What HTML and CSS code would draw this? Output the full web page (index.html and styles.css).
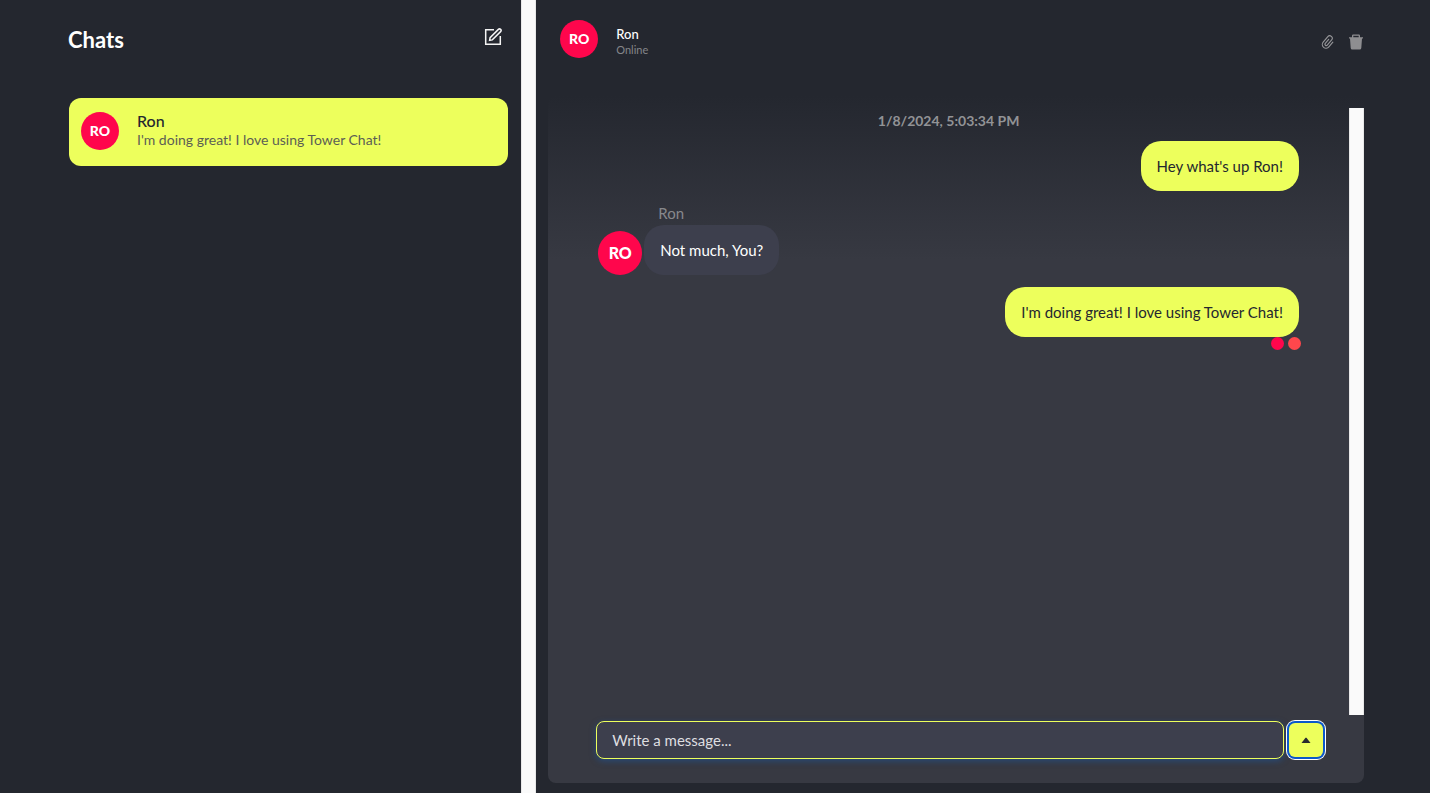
FILE: index.html
```html
<!DOCTYPE html>
<html lang="en">
<head>
<meta charset="utf-8">
<meta name="viewport" content="width=device-width, initial-scale=1">
<title>Tower Chat</title>
<link rel="stylesheet" href="styles.css">
</head>
<body>
<div class="app">
  <aside class="sidebar">
    <div class="sidebar-content">
      <header class="sidebar-header">
        <h1 class="title">Chats</h1>
        <button class="icon-button" type="button" aria-label="New chat">
          <svg width="18" height="18" viewBox="0 0 18 18" fill="none" stroke="#f4f4f4" stroke-width="1.5"><path d="M10 1.700H1.700v14.600h14.600V8"/><path d="M5.600 12.400l.5-2.700 8.300-8.300a1.400 1.400 0 0 1 2.200 2.200l-8.300 8.300z"/></svg>
        </button>
      </header>
      <a class="chat-card" href="#ron">
        <span class="avatar">RO</span>
        <span class="chat-summary">
          <span class="chat-name">Ron</span>
          <span class="chat-preview">I'm doing great! I love using Tower Chat!</span>
        </span>
      </a>
    </div>
    <div class="scroll-track"></div>
  </aside>
  <main class="conversation">
    <header class="conversation-header">
      <span class="avatar">RO</span>
      <div class="contact">
        <h2 class="contact-name">Ron</h2>
        <p class="contact-status">Online</p>
      </div>
      <div class="actions">
        <button class="icon-button" type="button" aria-label="Attachments">
          <svg width="16" height="16" viewBox="0 0 16 16" fill="none" stroke="#97979a" stroke-width="1.1" stroke-linecap="round"><path transform="translate(8 8) rotate(40)" d="M-1.200-2.500V2.800a1.300 1.300 0 0 0 2.600 0V-4a2.500 2.500 0 0 0-5 0V3.200a3.700 3.700 0 0 0 7.400 0V-3"/></svg>
        </button>
        <button class="icon-button" type="button" aria-label="Delete chat">
          <svg width="16" height="16" viewBox="0 0 16 16" fill="#8e8e91"><path d="M1 3.200h3V1.700Q4 .5 5.200.5h5.600Q12 .5 12 1.700v1.500h3v1.300h-1l-.7 9.500q-.1 1.500-1.600 1.500H4.300Q2.800 15.500 2.700 14L2 4.500H1zM5.300 3.200h5.400V1.700H5.300z" fill-rule="evenodd"/></svg>
        </button>
      </div>
    </header>
    <section class="panel">
      <div class="feed">
        <div class="messages">
          <time class="date">1/8/2024, 5:03:34 PM</time>
          <p class="bubble sent">Hey what's up Ron!</p>
          <div class="received">
            <span class="avatar avatar-large">RO</span>
            <div>
              <p class="sender">Ron</p>
              <p class="bubble bubble-received">Not much, You?</p>
            </div>
          </div>
          <p class="bubble sent">I'm doing great! I love using Tower Chat!</p>
          <div class="receipts"><span class="receipt"></span><span class="receipt receipt-self"></span></div>
        </div>
        <div class="scroll-track"></div>
      </div>
      <form class="composer">
        <input class="message-input" type="text" placeholder="Write a message..." aria-label="Message">
        <button class="send" type="button" aria-label="Send">
          <svg width="10" height="6" viewBox="0 0 10 6" fill="#292b2f"><path d="M.5 6L4.500.700h1L9.500 6z"/></svg>
        </button>
      </form>
    </section>
  </main>
</div>
</body>
</html>
```
FILE: styles.css
```css
* { box-sizing: border-box; }
body {
  margin: 0;
  background: #24272f;
  color: #fff;
  font-family: Lato, "Open Sans", sans-serif;
  font-size: 16px;
}
h1, h2, p { margin: 0; }
button { border: 0; padding: 0; background: none; cursor: pointer; }
svg { display: block; }
.app {
  display: grid;
  grid-template-columns: 3fr 5fr;
  min-height: 100vh;
}
.sidebar { display: flex; }
.sidebar-content { flex: 1; padding: 26px 13px 0 68px; }
.scroll-track {
  width: 15px;
  background: #fafafa;
  border: solid #e8e8e8;
  border-width: 0 1px;
}
.sidebar-header {
  display: flex;
  justify-content: space-between;
  align-items: flex-start;
  height: 72px;
  padding-right: 6px;
}
.sidebar-header .icon-button { margin-top: 2px; }
.title { font-size: 22px; line-height: 28px; font-weight: 700; }
.chat-card {
  display: flex;
  gap: 18px;
  height: 68px;
  margin-left: 1px;
  padding: 14px 12px;
  border-radius: 12px;
  background: #edff5c;
  color: #24272f;
  text-decoration: none;
}
.avatar {
  display: flex;
  align-items: center;
  justify-content: center;
  flex: none;
  width: 38px;
  height: 38px;
  padding-bottom: 2px;
  border-radius: 50%;
  background: #ff064c;
  color: #fff;
  font-size: 14px;
  font-weight: 900;
}
.avatar-large { width: 44px; height: 44px; font-size: 16px; }
.chat-summary { display: flex; flex-direction: column; }
.chat-name { font-size: 16px; line-height: 18px; font-weight: 500; }
.chat-preview { color: #5c5e55; font-size: 14px; line-height: 20px; }
.conversation {
  display: flex;
  flex-direction: column;
  padding: 20px 66px 10px 12px;
}
.conversation-header {
  display: flex;
  gap: 18px;
  height: 76px;
  padding-left: 12px;
}
.contact { padding-top: 6px; }
.contact-name { font-size: 13px; line-height: 16px; font-weight: 500; }
.contact-status { color: #85868a; font-size: 11px; line-height: 16px; }
.actions { display: flex; align-items: flex-start; gap: 12px; margin-left: auto; padding-top: 14px; }
.panel {
  display: flex;
  flex-direction: column;
  flex: 1;
  padding-top: 12px;
  border-radius: 8px;
  background: linear-gradient(#24272f, #373942 164px);
}
.feed { display: flex; flex: 1; }
.messages {
  display: flex;
  flex: 1;
  flex-direction: column;
  padding: 4px 50px 0;
}
.date {
  margin-bottom: 11px;
  color: #929396;
  font-size: 14px;
  line-height: 18px;
  font-weight: 700;
  text-align: center;
}
.bubble {
  width: fit-content;
  padding: 15px 16px;
  border-radius: 20px;
  font-size: 15px;
  line-height: 20px;
}
.sent { align-self: flex-end; background: #edff5c; color: #24272f; }
.received { display: flex; align-items: flex-end; gap: 2px; margin: 12px 0; }
.bubble-received { background: #3d3f4d; }
.sender { padding-left: 14px; color: #87888c; font-size: 15px; line-height: 20px; margin-bottom: 2px; }
.receipts { display: flex; justify-content: flex-end; gap: 4px; margin-right: -2px; }
.receipt { width: 13px; height: 13px; border-radius: 50%; background: #ff064c; }
.receipt-self { background: #ff474c; }
.composer { display: flex; align-items: center; gap: 5px; padding: 6px 41px 24px 48px; }
.message-input {
  flex: 1;
  min-width: 0;
  height: 38px;
  padding: 0 15px;
  border: 1px solid #edff5c;
  border-radius: 8px;
  background: #3d3f4d;
  box-shadow: 0 2px 6px rgb(24 92 175 / 50%);
  color: #fff;
  font: 15px Lato, "Open Sans", sans-serif;
}
.message-input::placeholder { color: #dedee0; opacity: 1; }
.send {
  display: flex;
  align-items: center;
  justify-content: center;
  width: 34px;
  height: 34px;
  border-radius: 6px;
  background: #edff5c;
  box-shadow: 0 0 0 2px #0c58ca, 0 0 0 3px #fff;
}
```
